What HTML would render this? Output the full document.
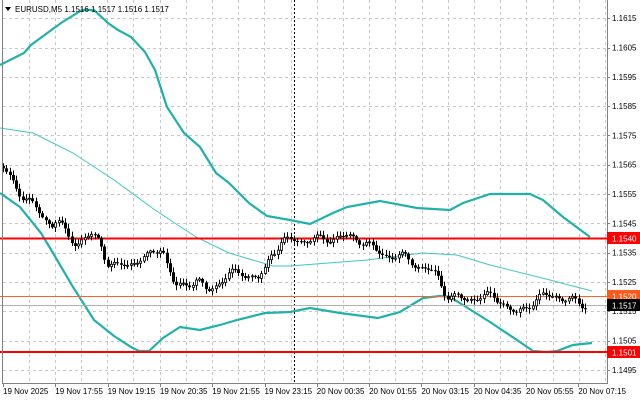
<!DOCTYPE html>
<html><head><meta charset="utf-8"><style>
html,body{margin:0;padding:0;background:#fff;}
svg{display:block;font-family:"Liberation Sans",sans-serif;}
</style></head><body>
<svg id="c" width="640" height="401" viewBox="0 0 640 401" xmlns="http://www.w3.org/2000/svg">
<rect width="640" height="401" fill="#fff"/>
<g id="grid" stroke="#c8c8c8" stroke-width="1" stroke-dasharray="3,3"></g>
<line x1="294.5" y1="0" x2="294.5" y2="383" stroke="#000" stroke-dasharray="2,2"/>
<polyline fill="none" stroke="#20b2aa" stroke-width="2.2" points="0,65 24,53 31,45 61,23 82,10 94,10 108,23 118,30 131,37 145,52 155,70 167,107 184,133 200,147 216,173 229,183 249,203 267,216 290,220 310,224 333,213 347,207 380,201 417,208 450,210 463,203 490,194 530,194 543,200 563,217 590,237"/>
<polyline fill="none" stroke="#40c8c0" stroke-width="1" points="0,128 33,133 73,153 114,180 155,210 196,237 229,253 273,266 290,266 367,260 423,253 457,255 490,265 550,280 592,291"/>
<polyline fill="none" stroke="#20b2aa" stroke-width="2.2" points="0,193 20,207 41,233 53,253 73,287 94,320 114,336 131,347 139,351 149,351 163,338 180,327 200,330 220,325 237,320 265,313 290,312 310,308 340,313 378,318 400,312 423,298 440,296 450,297 463,305 490,322 517,340 533,351 547,352 557,351 573,345 592,343"/>
<line x1="0" y1="238.5" x2="607" y2="238.5" stroke="#f00" stroke-width="2"/>
<line x1="0" y1="352" x2="607" y2="352" stroke="#f00" stroke-width="2"/>
<line x1="0" y1="296.5" x2="607" y2="296.5" stroke="#ff6030" stroke-width="1"/>
<line x1="0" y1="305.5" x2="607" y2="305.5" stroke="#b0b0b0" stroke-width="1"/>
<path id="wicks" d="" stroke="#000" stroke-width="1" fill="none"/>
<path id="bull" d="" fill="#fff" stroke="#000" stroke-width="0.8"/>
<path id="bear" d="" fill="#000"/>
<line x1="2.5" y1="0" x2="2.5" y2="383" stroke="#808080"/>
<line x1="607.5" y1="0" x2="607.5" y2="383" stroke="#808080"/>
<line x1="2" y1="383.5" x2="608" y2="383.5" stroke="#808080"/>
<g id="axis" font-size="8" fill="#000"></g>
<rect x="607" y="232" width="33" height="12" fill="#f00"/>
<text x="612" y="241.5" font-size="8" fill="#fff">1.1540</text>
<rect x="607" y="346" width="33" height="12" fill="#f00"/>
<text x="612" y="355.5" font-size="8" fill="#fff">1.1501</text>
<rect x="607" y="290" width="33" height="12" fill="#ff5a1a"/>
<text x="612" y="299.5" font-size="8" fill="#fff">1.1520</text>
<rect x="607" y="299" width="33" height="12" fill="#000"/>
<text x="612" y="308.5" font-size="8" fill="#fff">1.1517</text>
<path d="M5,7 L11,7 L8,11 Z" fill="#000"/>
<text x="15" y="12" font-size="8" fill="#000">EURUSD,M5  1.1516 1.1517 1.1516 1.1517</text>
</svg>
<script>
(function(){
var NS="http://www.w3.org/2000/svg";
function el(p,n,a){var e=document.createElementNS(NS,n);for(var k in a)e.setAttribute(k,a[k]);p.appendChild(e);return e;}
var grid=document.getElementById("grid");
for(var i=0;i<23;i++){var gx=Math.round(28.6+i*26.2)+0.5;if(gx<607)el(grid,"line",{x1:gx,y1:0,x2:gx,y2:383});}
var axis=document.getElementById("axis");
for(var i=0;i<13;i++){var p=1.1615-i*0.001;var py=47.5+(1.1605-p)*29300;var yy=Math.round(py)+0.5;
 if(yy>0&&yy<383)el(grid,"line",{x1:3,y1:yy,x2:607,y2:yy});
 var t=el(axis,"text",{x:612,y:(py+3).toFixed(1)});t.textContent=p.toFixed(4);
 el(axis,"line",{x1:607,y1:yy,x2:610,y2:yy,stroke:"#808080"});}
var labs=["19 Nov 2025","19 Nov 17:55","19 Nov 19:15","19 Nov 20:35","19 Nov 21:55","19 Nov 23:15","20 Nov 00:35","20 Nov 01:55","20 Nov 03:15","20 Nov 04:35","20 Nov 05:55","20 Nov 07:15"];
for(var i=0;i<labs.length;i++){var lx=3+i*52.3;var t2=el(axis,"text",{x:lx.toFixed(1),y:394});t2.textContent=labs[i];
 el(axis,"line",{x1:Math.round(lx)+0.5,y1:383,x2:Math.round(lx)+0.5,y2:387,stroke:"#808080"});}
var pts=[[3,166],[15,180],[25,195],[35,205],[45,215],[55,225],[60,220],[70,235],[80,243],[95,236],[103,240],[110,262],[120,268],[135,262],[150,258],[165,245],[170,265],[178,288],[190,283],[200,280],[210,292],[222,282],[232,275],[245,272],[262,280],[268,270],[274,253],[285,242],[300,240],[320,240],[340,237],[360,238],[370,243],[378,252],[395,256],[410,258],[425,268],[440,275],[450,295],[465,300],[480,297],[495,297],[505,300],[512,310],[520,315],[530,305],[545,297],[560,295],[570,300],[580,303],[587,305]];
function yAt(q){for(var i=1;i<pts.length;i++){if(q<=pts[i][0]){var a=pts[i-1],b=pts[i];return a[1]+(b[1]-a[1])*(q-a[0])/(b[0]-a[0]);}}return pts[pts.length-1][1];}
var wd="",bu="",be="";
var prev=yAt(3);
for(var k=0;k<179;k++){
 var x=3+k*3.27;
 var c=yAt(x+3.27)+Math.sin(x*1.7)*3.5+Math.sin(x*0.37)*2;
 var o=prev;var yt=Math.min(o,c),yb=Math.max(o,c);
 var hi=yt-1-Math.abs(Math.sin(x*0.9))*4,lo=yb+1+Math.abs(Math.cos(x*1.3))*4;
 var cx=Math.round(x)+0.5;
 wd+="M"+cx+" "+hi.toFixed(1)+"V"+lo.toFixed(1);
 var h=Math.max(1,yb-yt);
 if(c<o) bu+="M"+(cx-1)+" "+yt.toFixed(1)+"h2v"+h.toFixed(1)+"h-2z";
 else be+="M"+(cx-1.5)+" "+yt.toFixed(1)+"h3v"+h.toFixed(1)+"h-3z";
 prev=c;}
document.getElementById("wicks").setAttribute("d",wd);
document.getElementById("bull").setAttribute("d",bu);
document.getElementById("bear").setAttribute("d",be);
})();
</script>
</body></html>
